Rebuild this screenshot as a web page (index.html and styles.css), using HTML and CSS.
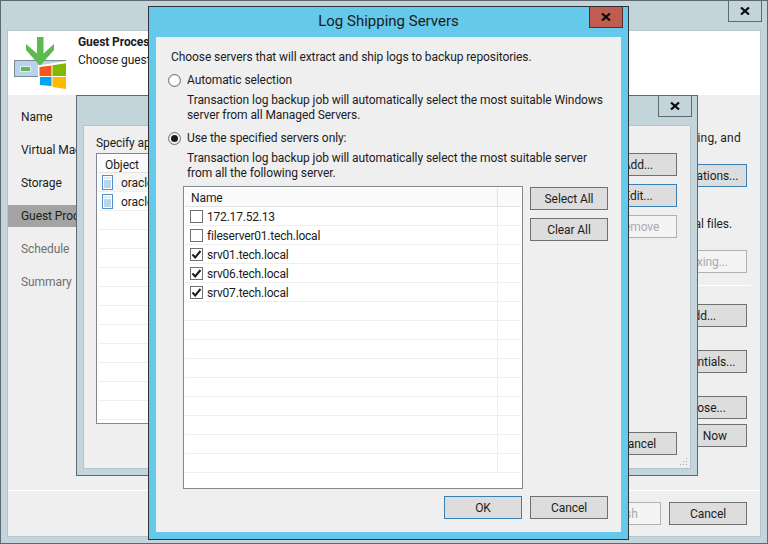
FILE: index.html
```html
<!DOCTYPE html>
<html lang="en">
<head>
<meta charset="utf-8">
<title>Log Shipping Servers</title>
<link rel="stylesheet" href="styles.css">
</head>
<body>
<section class="win win-outer">
  <button class="close"><svg viewBox="0 0 10 8" width="10" height="8"><path d="M1 .5 9 7.5M9 .5 1 7.5" class="x"/></svg></button>
  <div class="pane pane-outer">
    <header class="wiz-head">
      <svg class="wiz-icon" viewBox="0 0 56 54" width="56" height="54">
        <rect x=".5" y="23.500" width="51" height="16" fill="#b9d3ea" stroke="#7d8a94"/>
        <rect x="6.500" y="29.500" width="10" height="5" fill="#5dba4e" stroke="#dfeaf3"/>
        <path d="M23 0h6.500v16.500L40 7v6L26 29 12 13V7l11 9.500z" fill="#5dba4e"/>
        <path d="M24 28.500 52 24v29L24 49z" fill="#fff"/>
        <path d="M25.500 30 37.500 28.500V39H25.500z" fill="#f4561d"/>
        <path d="M38.500 28.300 52 26.300V39H38.500z" fill="#7fba00"/>
        <path d="M26 40H37.500V49L26 48z" fill="#00a4ef"/>
        <path d="M38.500 40H52V52L38.500 50z" fill="#ffb900"/>
      </svg>
      <div class="wiz-text">
        <div class="wiz-title">Guest Processing</div>
        <div>Choose guest OS processing options</div>
      </div>
    </header>
    <div class="wiz-body">
      <nav class="nav">
        <div class="nav-item">Name</div>
        <div class="nav-item">Virtual Machines</div>
        <div class="nav-item">Storage</div>
        <div class="nav-item nav-on">Guest Processing</div>
        <div class="nav-item nav-off">Schedule</div>
        <div class="nav-item nav-off">Summary</div>
      </nav>
      <div class="wiz-side">
        <p class="side-a">Enable application-aware processing, and</p>
        <button class="btn btn-w btn-focus m18">Applications...</button>
        <p class="side-b">Enable indexing of guest file system and original files.</p>
        <button class="btn btn-w btn-dis m18">Indexing...</button>
        <div class="side-rule"></div>
        <button class="btn btn-w m18">Add...</button>
        <button class="btn btn-w m23">Credentials...</button>
        <button class="btn btn-w m23">Choose...</button>
        <button class="btn btn-w btn-now m5">Test Now</button>
      </div>
    </div>
    <footer class="wiz-foot">
      <button class="btn btn-dis">Finish</button>
      <button class="btn">Cancel</button>
    </footer>
  </div>
</section>

<section class="win win-mid">
  <button class="close"><svg viewBox="0 0 10 8" width="10" height="8"><path d="M1 .5 9 7.5M9 .5 1 7.5" class="x"/></svg></button>
  <div class="pane pane-mid">
    <p class="mid-label">Specify application-aware processing settings:</p>
    <div class="mid-row">
      <div class="obj-table">
        <div class="obj-head">Object</div>
        <div class="obj-row obj-first"><svg class="doc" viewBox="0 0 11 15" width="11" height="15"><rect x=".5" y=".5" width="10" height="14" fill="#fff" stroke="#4a93cc"/><rect x="2" y="5" width="7" height="8" fill="#b9d6ee"/><path d="M2 3h7" stroke="#b9d6ee"/></svg><span class="obj-name">oracle01.tech.local</span></div>
        <div class="obj-row"><svg class="doc" viewBox="0 0 11 15" width="11" height="15"><rect x=".5" y=".5" width="10" height="14" fill="#fff" stroke="#4a93cc"/><rect x="2" y="5" width="7" height="8" fill="#b9d6ee"/><path d="M2 3h7" stroke="#b9d6ee"/></svg><span class="obj-name">oracle02.tech.local</span></div>
        <div class="obj-row"></div><div class="obj-row"></div><div class="obj-row"></div><div class="obj-row"></div><div class="obj-row"></div><div class="obj-row"></div><div class="obj-row"></div><div class="obj-row"></div><div class="obj-row"></div><div class="obj-row"></div><div class="obj-row"></div>
      </div>
      <div class="mid-btns">
        <button class="btn">Add...</button>
        <button class="btn btn-focus">Edit...</button>
        <button class="btn btn-dis">Remove</button>
      </div>
    </div>
    <div class="mid-foot"><button class="btn">Cancel</button></div>
    <svg class="grip" viewBox="0 0 9 9" width="9" height="9"><path d="M7 1h1v1H7zM4 4h1v1H4zM7 4h1v1H7zM1 7h1v1H1zM4 7h1v1H4zM7 7h1v1H7z" fill="#a4a9ac"/></svg>
  </div>
</section>

<section class="win win-front">
  <h1 class="title">Log Shipping Servers</h1>
  <button class="close close-red"><svg viewBox="0 0 10 8" width="10" height="8"><path d="M1 .5 9 7.5M9 .5 1 7.5" class="x"/></svg></button>
  <div class="pane pane-front">
    <p class="line">Choose servers that will extract and ship logs to backup repositories.</p>
    <label class="radio-row m7"><span class="radio"></span>Automatic selection</label>
    <p class="desc">Transaction log backup job will automatically select the most suitable Windows<br>server from all Managed Servers.</p>
    <label class="radio-row m7"><span class="radio radio-on"></span>Use the specified servers only:</label>
    <p class="desc">Transaction log backup job will automatically select the most suitable server<br>from all the following server.</p>
    <div class="pick">
      <div class="list">
        <div class="list-head"><span class="cell-main">Name</span><span class="cell-end"></span></div>
        <div class="list-row"><span class="cell-main"><span class="cb"></span>172.17.52.13</span><span class="cell-end"></span></div>
        <div class="list-row"><span class="cell-main"><span class="cb"></span>fileserver01.tech.local</span><span class="cell-end"></span></div>
        <div class="list-row"><span class="cell-main"><span class="cb"><svg viewBox="0 0 11 11" width="11" height="11"><path d="M1.500 5.500 4.200 8.500 9.500 2" class="tick"/></svg></span>srv01.tech.local</span><span class="cell-end"></span></div>
        <div class="list-row"><span class="cell-main"><span class="cb"><svg viewBox="0 0 11 11" width="11" height="11"><path d="M1.500 5.500 4.200 8.500 9.500 2" class="tick"/></svg></span>srv06.tech.local</span><span class="cell-end"></span></div>
        <div class="list-row"><span class="cell-main"><span class="cb"><svg viewBox="0 0 11 11" width="11" height="11"><path d="M1.500 5.500 4.200 8.500 9.500 2" class="tick"/></svg></span>srv07.tech.local</span><span class="cell-end"></span></div>
        <div class="list-row"><span class="cell-main"></span><span class="cell-end"></span></div>
        <div class="list-row"><span class="cell-main"></span><span class="cell-end"></span></div>
        <div class="list-row"><span class="cell-main"></span><span class="cell-end"></span></div>
        <div class="list-row"><span class="cell-main"></span><span class="cell-end"></span></div>
        <div class="list-row"><span class="cell-main"></span><span class="cell-end"></span></div>
        <div class="list-row"><span class="cell-main"></span><span class="cell-end"></span></div>
        <div class="list-row"><span class="cell-main"></span><span class="cell-end"></span></div>
        <div class="list-row"><span class="cell-main"></span><span class="cell-end"></span></div>
        <div class="list-row"><span class="cell-main"></span><span class="cell-end"></span></div>
      </div>
      <div class="pick-btns">
        <button class="btn">Select All</button>
        <button class="btn">Clear All</button>
      </div>
    </div>
    <div class="front-foot">
      <button class="btn btn-focus">OK</button>
      <button class="btn">Cancel</button>
    </div>
  </div>
</section>
</body>
</html>
```

FILE: styles.css
```css
* { box-sizing: border-box; }
html, body { margin: 0; height: 100%; }
body {
  position: relative;
  width: 768px;
  height: 544px;
  overflow: hidden;
  background: #c3d5db;
  font: 12px/15px Roboto, "Noto Sans", sans-serif;
  letter-spacing: -.08px;
  color: #1c1c1c;
}
p { margin: 0; }

/* windows */
.win {
  position: absolute;
  display: flex;
  flex-direction: column;
  border: 1px solid #5f686e;
  background: #c3d5db;
}
.win-outer { left: 0; top: 0; width: 768px; height: 544px; padding: 30px 7px 7px; }
.win-mid { left: 76px; top: 95px; width: 622px; height: 381px; padding: 30px 7px 7px; }
.win-front { left: 148px; top: 6px; width: 481px; height: 534px; padding: 30px 7px 7px; background: #64c9ea; border-color: #2f3336; }

.pane {
  flex: 1;
  display: flex;
  flex-direction: column;
  position: relative;
  background: #efefef;
  min-height: 0;
}
.pane-outer, .pane-mid { box-shadow: 0 0 0 1px #b5c4ca; }
.pane-front { padding: 13px 13px 0 15px; }

.title {
  position: absolute;
  left: 0;
  right: 0;
  top: 5px;
  margin: 0;
  text-align: center;
  font-size: 15px;
  line-height: 18px;
  font-weight: 400;
  letter-spacing: 0;
}
.close {
  position: absolute;
  right: 5px;
  top: 0;
  width: 34px;
  height: 21px;
  padding: 0;
  border: 1px solid #5f686e;
  border-top: 0;
  background: transparent;
  display: flex;
  align-items: center;
  justify-content: center;
}
.close-red { background: #c25c50; border-color: #53302c; }
.x { fill: none; stroke: #0a0a0a; stroke-width: 2.200; }

/* buttons */
.btn {
  width: 78px;
  height: 23px;
  padding: 2px 0 0;
  flex: none;
  border: 1px solid #707070;
  background: #dddddd;
  font: inherit;
  letter-spacing: inherit;
  color: #1c1c1c;
  white-space: nowrap;
}
.btn-focus { border-color: #3b80b5; }
.btn-dis { background: #f4f4f4; border-color: #adb2b2; color: #a9a9a9; }
.btn-w { width: 92px; }
.btn-now { word-spacing: 2px; }
.m5 { margin-top: 5px; }
.m18 { margin-top: 18px; }
.m23 { margin-top: 23px; }

/* outer wizard */
.wiz-head {
  height: 64px;
  flex: none;
  display: flex;
  background: #fff;
}
.wiz-icon { margin: 6px 0 0 6px; flex: none; }
.wiz-text { margin: 2px 0 0 8px; line-height: 18px; }
.wiz-title { font-weight: 700; }
.wiz-body { flex: 1; display: flex; justify-content: space-between; min-height: 0; }
.nav { width: 126px; flex: none; padding-top: 11px; }
.nav-item { height: 22px; margin-bottom: 11px; padding-left: 13px; line-height: 22px; }
.nav-on { background: #a3a3a3; }
.nav-off { color: #6f6f6f; }
.wiz-side {
  flex: 1;
  display: flex;
  flex-direction: column;
  align-items: flex-end;
  padding: 36px 13px 0 0;
  min-width: 0;
}
.wiz-side p { white-space: nowrap; }
.side-a { margin-right: 6px; letter-spacing: .25px; }
.side-b { margin: 30px 15px 0 0; }
.side-rule { width: 300px; height: 1px; margin: 12px -4px 0 0; background: #fff; }
.wiz-foot {
  height: 46px;
  flex: none;
  display: flex;
  justify-content: flex-end;
  gap: 8px;
  padding: 11px 13px 0 0;
  border-top: 1px solid #fff;
}

/* middle dialog */
.pane-mid { padding: 10px 13px 0 12px; }
.mid-label { white-space: nowrap; }
.mid-row { display: flex; justify-content: space-between; margin-top: 2px; }
.obj-table { width: 495px; height: 271px; padding: 1px; border: 1px solid #828790; background: #fff; overflow: hidden; }
.obj-head { height: 18px; padding-left: 7px; line-height: 20px; background: #fafafa; border-bottom: 1px solid #e3e3e3; }
.obj-row { height: 19px; display: flex; align-items: center; gap: 8px; padding-left: 4px; border-bottom: 1px solid #efefef; }
.obj-first { background: #f6f6f6; }
.obj-name { padding-top: 2px; }
.doc { flex: none; }
.mid-btns { display: flex; flex-direction: column; gap: 8px; }
.mid-foot { display: flex; justify-content: flex-end; margin-top: 8px; }
.grip { position: absolute; right: 2px; bottom: 2px; }

/* front dialog */
.radio-row { display: flex; align-items: center; height: 16px; margin-left: -3px; gap: 6px; }
.m7 { margin-top: 7px; }
.radio {
  width: 13px;
  height: 13px;
  flex: none;
  border-radius: 50%;
  border: 1px solid #6f6f6f;
  background: #fff;
  box-shadow: inset 0 0 0 1px #e4e4e4;
  display: flex;
  align-items: center;
  justify-content: center;
}
.radio-on::after { content: ""; width: 7px; height: 7px; border-radius: 50%; background: #1b1b1b; }
.desc { margin: 5px 0 0 16px; white-space: nowrap; }
.pick { display: flex; gap: 7px; margin: 5px 0 0 12px; }
.list { width: 340px; height: 303px; flex: none; padding: 1px; border: 1px solid #828790; background: #fff; overflow: hidden; }
.list-head, .list-row { display: flex; }
.list-head { height: 19px; background: #fafafa; border-bottom: 1px solid #e3e3e3; line-height: 20px; }
.list-row { height: 19px; border-bottom: 1px solid #efefef; letter-spacing: -.2px; }
.cell-main { width: 313px; flex: none; display: flex; align-items: center; padding: 2px 0 0 5px; border-right: 1px solid #efefef; }
.list-head .cell-main { padding: 1px 0 0 6px; border-right-color: #e3e3e3; }
.cell-end { flex: 1; }
.cb {
  width: 13px;
  height: 13px;
  flex: none;
  margin: -2px 4px 0 0;
  border: 1px solid #707070;
  background: #fff;
  display: flex;
}
.tick { fill: none; stroke: #1b1b1b; stroke-width: 2; }
.pick-btns { display: flex; flex-direction: column; gap: 8px; padding-top: 1px; }
.front-foot { display: flex; justify-content: flex-end; gap: 8px; margin-top: 7px; }
```
